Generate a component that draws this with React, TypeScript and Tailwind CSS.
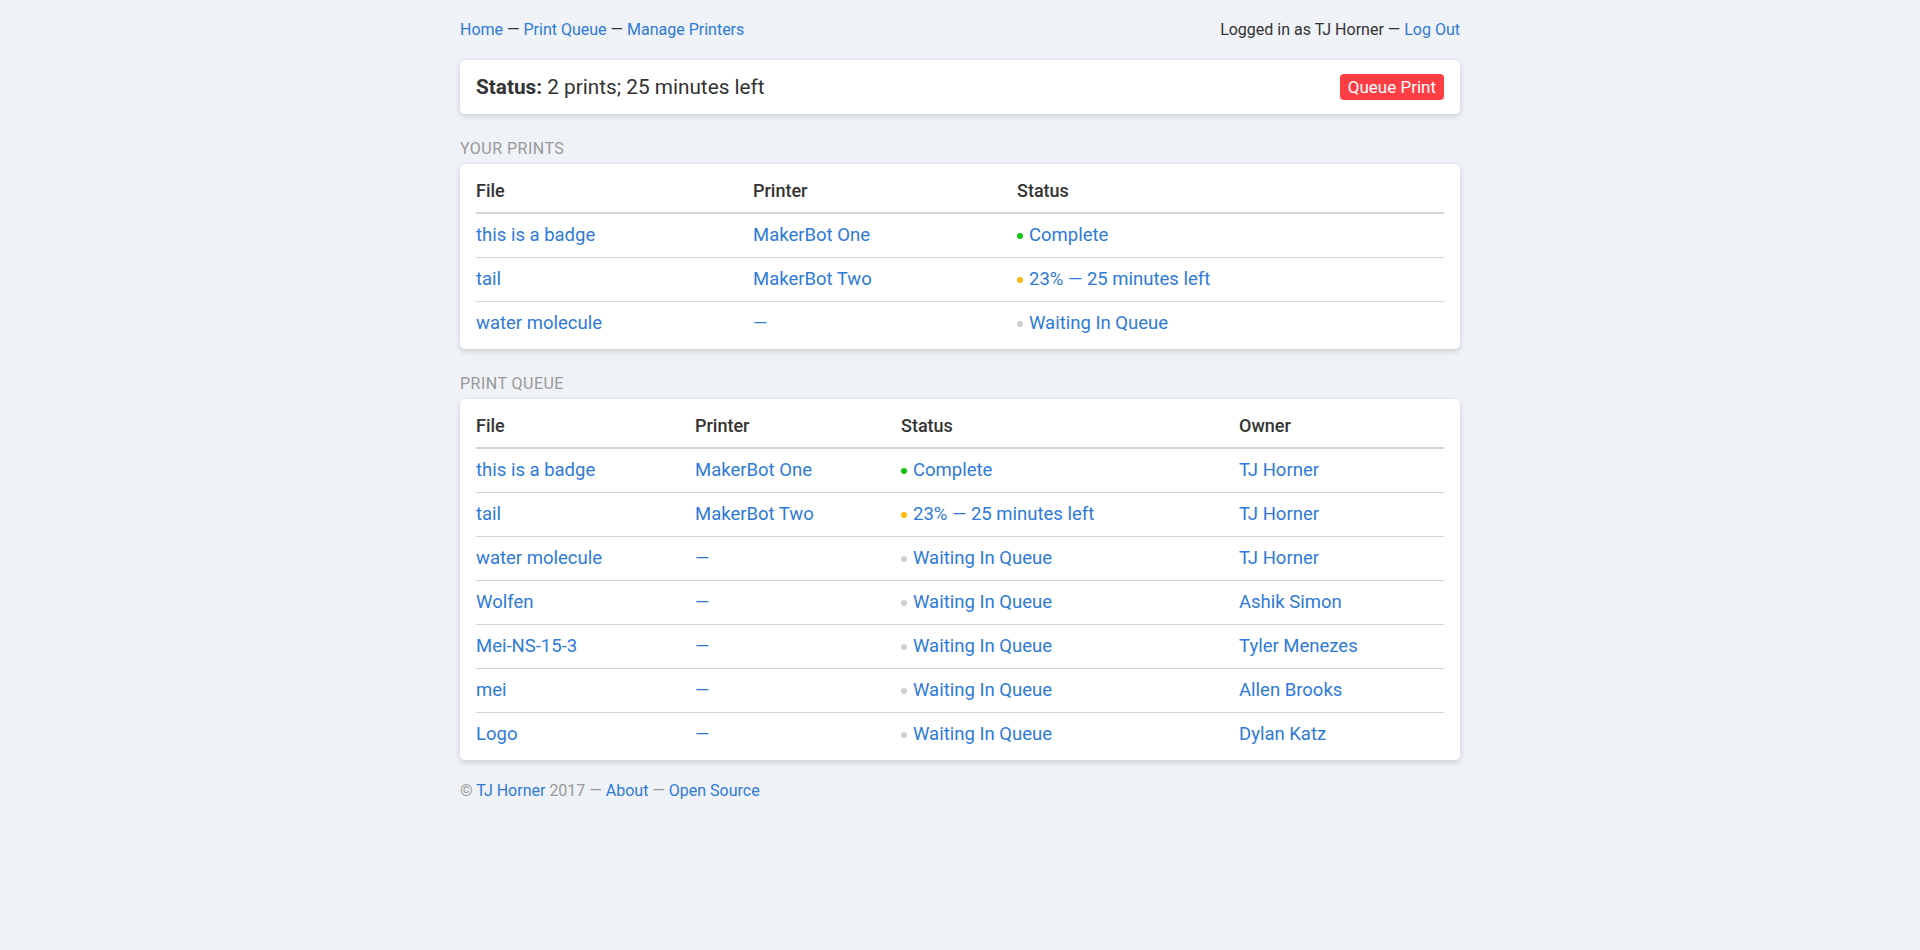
const link = 'text-[#2e7ad8]';

type Dot = 'done' | 'printing' | 'waiting';

const dotColor: Record<Dot, string> = {
  done: 'bg-[#0ec40e]',
  printing: 'bg-[#ffb90f]',
  waiting: 'bg-[#cfcfcf]',
};

const statusText: Record<Dot, string> = {
  done: 'Complete',
  printing: '23% — 25 minutes left',
  waiting: 'Waiting In Queue',
};

const yourPrints: { file: string; printer: string; status: Dot }[] = [
  { file: 'this is a badge', printer: 'MakerBot One', status: 'done' },
  { file: 'tail', printer: 'MakerBot Two', status: 'printing' },
  { file: 'water molecule', printer: '—', status: 'waiting' },
];

const queue: { file: string; printer: string; status: Dot; owner: string }[] = [
  { file: 'this is a badge', printer: 'MakerBot One', status: 'done', owner: 'TJ Horner' },
  { file: 'tail', printer: 'MakerBot Two', status: 'printing', owner: 'TJ Horner' },
  { file: 'water molecule', printer: '—', status: 'waiting', owner: 'TJ Horner' },
  { file: 'Wolfen', printer: '—', status: 'waiting', owner: 'Ashik Simon' },
  { file: 'Mei-NS-15-3', printer: '—', status: 'waiting', owner: 'Tyler Menezes' },
  { file: 'mei', printer: '—', status: 'waiting', owner: 'Allen Brooks' },
  { file: 'Logo', printer: '—', status: 'waiting', owner: 'Dylan Katz' },
];

function Status({ s }: { s: Dot }) {
  return (
    <a href="#" className={`flex items-center gap-[6px] ${link}`}>
      <span className={`h-[6px] w-[6px] rounded-full ${dotColor[s]}`} />
      {statusText[s]}
    </a>
  );
}

function Card({ children, className = '' }: { children: React.ReactNode; className?: string }) {
  return (
    <div className={`rounded-[5px] bg-white shadow-[0_2px_6px_rgba(0,0,0,0.16)] ${className}`}>{children}</div>
  );
}

function SectionLabel({ children }: { children: React.ReactNode }) {
  return <p className="mt-[25px] mb-[5px] text-[16px] leading-[20px] uppercase tracking-[0.03em] text-[#999]">{children}</p>;
}

export default function App() {
  return (
    <main className="min-h-[950px] bg-[#eff2f7] font-['Roboto',sans-serif] text-[#333]">
      <div className="mx-auto w-[1000px] pt-[18px]">
        <nav className="flex justify-between text-[16px] leading-[24px]">
          <div>
            <a href="#" className={link}>Home</a> — <a href="#" className={link}>Print Queue</a> —{' '}
            <a href="#" className={link}>Manage Printers</a>
          </div>
          <div>
            Logged in as TJ Horner — <a href="#" className={link}>Log Out</a>
          </div>
        </nav>

        <Card className="mt-[18px] flex items-center justify-between px-4 py-[13px]">
          <p className="text-[20.75px] leading-[28px]">
            <b className="font-bold">Status:</b> 2 prints; 25 minutes left
          </p>
          <button className="h-[26px] rounded-[4px] bg-[#ff3d44] px-[8px] text-[17px] leading-[26px] text-white">
            Queue Print
          </button>
        </Card>

        <SectionLabel>Your Prints</SectionLabel>
        <Card className="px-4 pt-[4px] pb-[4px] text-[18.5px]">
          <div className="grid h-[46px] grid-cols-[277px_264px_1fr] items-center border-b-2 border-[#d4d4d4] text-[18px] font-medium">
            <span>File</span>
            <span>Printer</span>
            <span>Status</span>
          </div>
          {yourPrints.map((r, i) => (
            <div
              key={r.file}
              className={`grid grid-cols-[277px_264px_1fr] items-center ${i ? 'h-[44px] border-t border-[#d6d6d6]' : 'h-[43px]'}`}
            >
              <a href="#" className={link}>{r.file}</a>
              <a href="#" className={link}>{r.printer}</a>
              <Status s={r.status} />
            </div>
          ))}
        </Card>

        <SectionLabel>Print Queue</SectionLabel>
        <Card className="px-4 pt-[4px] pb-[4px] text-[18.5px]">
          <div className="grid h-[46px] grid-cols-[219px_206px_338px_1fr] items-center border-b-2 border-[#d4d4d4] text-[18px] font-medium">
            <span>File</span>
            <span>Printer</span>
            <span>Status</span>
            <span>Owner</span>
          </div>
          {queue.map((r, i) => (
            <div
              key={r.file}
              className={`grid grid-cols-[219px_206px_338px_1fr] items-center ${i ? 'h-[44px] border-t border-[#d6d6d6]' : 'h-[43px]'}`}
            >
              <a href="#" className={link}>{r.file}</a>
              <a href="#" className={link}>{r.printer}</a>
              <Status s={r.status} />
              <a href="#" className={link}>{r.owner}</a>
            </div>
          ))}
        </Card>

        <footer className="mt-[20px] text-[16px] leading-[22px] text-[#999]">
          © <a href="#" className={link}>TJ Horner</a> 2017 — <a href="#" className={link}>About</a> —{' '}
          <a href="#" className={link}>Open Source</a>
        </footer>
      </div>
    </main>
  );
}
